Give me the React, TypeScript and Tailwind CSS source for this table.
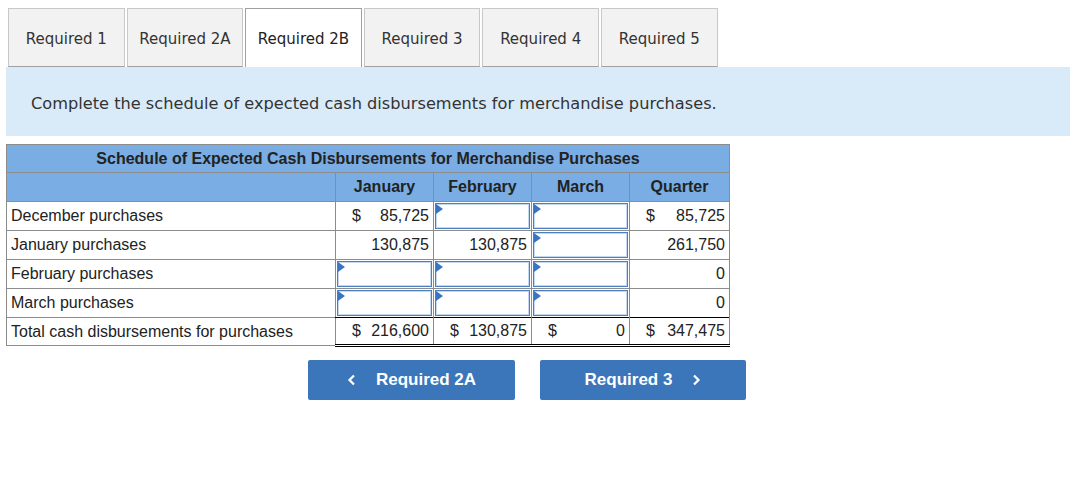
const tabs = ["Required 1", "Required 2A", "Required 2B", "Required 3", "Required 4", "Required 5"];

function Input() {
  return (
    <div className="relative h-[26px] mx-[1px] border border-[#4a7fc0] shadow-[inset_0_0_0_1px_#c4d8ef] bg-white">
      <span className="absolute left-0 top-0 w-0 h-0 border-t-[5px] border-b-[5px] border-l-[7px] border-t-transparent border-b-transparent border-l-[#3a75c4]" />
    </div>
  );
}

function Money({ sign, value }: { sign?: boolean; value: string }) {
  return (
    <div className="flex justify-between px-[4px] pl-[16px]">
      <span>{sign ? "$" : ""}</span>
      <span>{value}</span>
    </div>
  );
}

export default function App() {
  const cell = "border border-[#8c8c8c] h-[29px] p-0 align-middle";
  const total = "border border-[#8c8c8c] border-t-black border-b-[3px] border-b-black border-double h-[28px] p-0";
  return (
    <div className="w-[1083px] h-[480px] bg-white text-[#222]">
      <div className="flex gap-[2px] pl-[8px] pt-[8px]">
        {tabs.map((t, i) => (
          <div
            key={t}
            className={
              i === 2
                ? "w-[116.6px] h-[59px] pt-[3px] flex items-center justify-center bg-white border border-b-0 border-[#a0a0a0] text-[15px] text-[#222]"
                : "w-[116.6px] h-[59px] pt-[3px] flex items-center justify-center bg-[#f2f2f2] border border-[#c8c8c8] border-b-[#a0a0a0] text-[15px] text-[#333]"
            }
            style={{ fontFamily: "Verdana, 'DejaVu Sans', sans-serif" }}
          >
            {t}
          </div>
        ))}
      </div>
      <div
        className="ml-[6px] w-[1064px] h-[69px] pt-[5px] bg-[#d9ebf9] flex items-center pl-[25px] text-[16.2px] text-[#333]"
        style={{ fontFamily: "Verdana, 'DejaVu Sans', sans-serif" }}
      >
        Complete the schedule of expected cash disbursements for merchandise purchases.
      </div>

      <div className="mt-[8px] ml-[6px]" style={{ fontFamily: "'Liberation Sans', Arial, sans-serif" }}>
        <table className="border-collapse text-[16px] text-[#222] table-fixed w-[723px]">
          <colgroup>
            <col className="w-[329px]" />
            <col className="w-[98px]" />
            <col className="w-[98px]" />
            <col className="w-[98px]" />
            <col className="w-[100px]" />
          </colgroup>
          <tbody>
            <tr className="bg-[#79ade3]">
              <td colSpan={5} className="border border-[#8c8c8c] h-[28px] p-0 text-center font-bold">
                Schedule of Expected Cash Disbursements for Merchandise Purchases
              </td>
            </tr>
            <tr className="bg-[#79ade3] font-bold">
              <td className={cell}></td>
              <td className={cell + " text-center"}>January</td>
              <td className={cell + " text-center"}>February</td>
              <td className={cell + " text-center"}>March</td>
              <td className={cell + " text-center"}>Quarter</td>
            </tr>
            <tr>
              <td className={cell + " pl-[4px]"}>December purchases</td>
              <td className={cell}><Money sign value="85,725" /></td>
              <td className={cell}><Input /></td>
              <td className={cell}><Input /></td>
              <td className={cell}><Money sign value="85,725" /></td>
            </tr>
            <tr>
              <td className={cell + " pl-[4px]"}>January purchases</td>
              <td className={cell}><Money value="130,875" /></td>
              <td className={cell}><Money value="130,875" /></td>
              <td className={cell}><Input /></td>
              <td className={cell}><Money value="261,750" /></td>
            </tr>
            <tr>
              <td className={cell + " pl-[4px]"}>February purchases</td>
              <td className={cell}><Input /></td>
              <td className={cell}><Input /></td>
              <td className={cell}><Input /></td>
              <td className={cell}><Money value="0" /></td>
            </tr>
            <tr>
              <td className={cell + " pl-[4px]"}>March purchases</td>
              <td className={cell}><Input /></td>
              <td className={cell}><Input /></td>
              <td className={cell}><Input /></td>
              <td className={cell}><Money value="0" /></td>
            </tr>
            <tr>
              <td className="border border-[#8c8c8c] h-[28px] p-0 pl-[4px]">Total cash disbursements for purchases</td>
              <td className={total}>
                <div className="flex justify-between px-[4px] pl-[16px]"><span>$</span><span>216,600</span></div>
              </td>
              <td className={total}>
                <div className="flex justify-between px-[4px] pl-[16px]"><span>$</span><span>130,875</span></div>
              </td>
              <td className={total}>
                <div className="flex justify-between px-[4px] pl-[16px]"><span>$</span><span>0</span></div>
              </td>
              <td className={total}>
                <div className="flex justify-between px-[4px] pl-[16px]"><span>$</span><span>347,475</span></div>
              </td>
            </tr>
          </tbody>
        </table>
      </div>

      <div className="flex gap-[25px] pl-[308px] mt-[13px]" style={{ fontFamily: "'Liberation Sans', Arial, sans-serif" }}>
        <div className="w-[207px] h-[40px] rounded-[2px] bg-[#3a76b9] text-white font-bold text-[17px] flex items-center justify-center gap-[19px]">
          <svg width="10" height="12" viewBox="0 0 10 12" fill="none" stroke="white" strokeWidth="2.2">
            <path d="M7 1.5 L2.5 6 L7 10.5" />
          </svg>
          <span>Required 2A</span>
        </div>
        <div className="w-[206px] h-[40px] rounded-[2px] bg-[#3a76b9] text-white font-bold text-[17px] flex items-center justify-center gap-[19px]">
          <span>Required 3</span>
          <svg width="10" height="12" viewBox="0 0 10 12" fill="none" stroke="white" strokeWidth="2.2">
            <path d="M3 1.5 L7.5 6 L3 10.5" />
          </svg>
        </div>
      </div>
    </div>
  );
}
